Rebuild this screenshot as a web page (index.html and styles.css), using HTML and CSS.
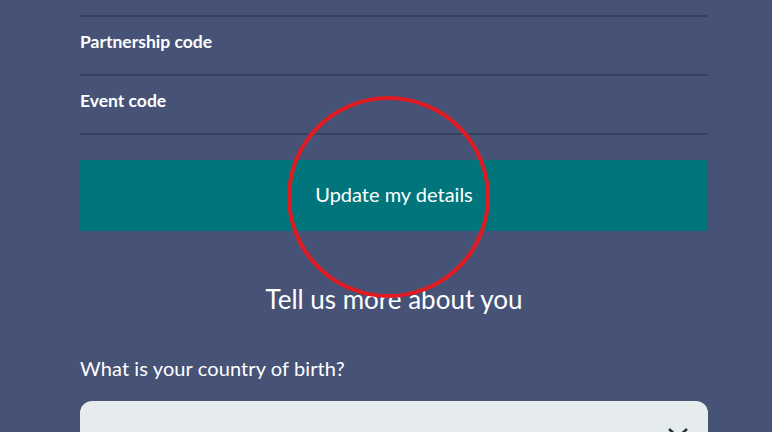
FILE: index.html
```html
<!DOCTYPE html>
<html>
<head>
<meta charset="utf-8">
<link rel="stylesheet" href="styles.css">
</head>
<body>
<div class="page">
  <div class="rows">
    <div class="row">Partnership code</div>
    <div class="row">Event code</div>
  </div>
  <div class="btn-wrap">
    <button class="btn">Update my details</button>
    <span class="ring"></span>
  </div>
  <h2 class="heading">Tell us more about you</h2>
  <label class="question">What is your country of birth?</label>
  <div class="select">
    <svg class="chev" width="22" height="14" viewBox="0 0 22 14"><path d="M2 3 L11 11 L20 3" fill="none" stroke="#243040" stroke-width="2.5"/></svg>
  </div>
</div>
</body>
</html>
```
FILE: styles.css
```css
* { box-sizing: border-box; }
html, body { margin: 0; padding: 0; }
body {
  background: #465377;
  font-family: Lato, "Open Sans", sans-serif;
  color: #fff;
  overflow: hidden;
  height: 432px;
}
.page {
  width: 628px;
  margin: 0 auto 0 80px;
  padding-top: 15px;
}
.rows {
  border-top: 2px solid #38425f;
}
.row {
  height: 59px;
  border-bottom: 2px solid #38425f;
  font-weight: 700;
  font-size: 17.5px;
  display: flex;
  align-items: center;
  padding-bottom: 8px;
  letter-spacing: 0;
}
.btn-wrap {
  position: relative;
  margin-top: 25px;
}
.btn {
  display: block;
  width: 100%;
  height: 71px;
  background: #00767c;
  border: none;
  color: #fff;
  font-family: Lato, "Open Sans", sans-serif;
  font-size: 20px;
  padding: 0 0 4px;
}
.ring {
  position: absolute;
  left: 207px;
  top: -64px;
  width: 203px;
  height: 202px;
  border: 4px solid #e11b22;
  border-radius: 50%;
}
.heading {
  margin: 52px 0 0;
  font-weight: 400;
  font-size: 26px;
  text-align: center;
  line-height: 32px;
}
.question {
  display: block;
  margin-top: 41px;
  font-size: 20px;
  line-height: 24px;
  letter-spacing: 0.1px;
}
.select {
  position: relative;
  margin-top: 21px;
  height: 60px;
  background: #e6ebee;
  border-radius: 12px;
}
.chev {
  position: absolute;
  right: 19px;
  top: 25px;
}
```
